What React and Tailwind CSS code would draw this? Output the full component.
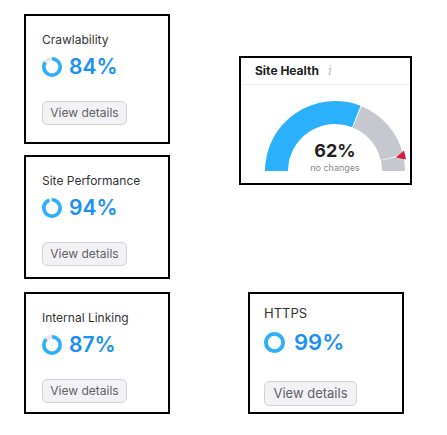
import React from "react";

function Ring({ pct, size = 20, stroke = 3.6 }) {
  const r = (size - stroke) / 2;
  const c = 2 * Math.PI * r;
  return (
    <svg width={size} height={size} viewBox={`0 0 ${size} ${size}`} className="shrink-0">
      <circle cx={size / 2} cy={size / 2} r={r} fill="none" stroke="#e3e4e8" strokeWidth={stroke} />
      <circle
        cx={size / 2}
        cy={size / 2}
        r={r}
        fill="none"
        stroke="#2bb1fb"
        strokeWidth={stroke}
        strokeDasharray={`${(pct / 100) * c} ${c}`}
        transform={`rotate(-90 ${size / 2} ${size / 2})`}
      />
    </svg>
  );
}

function MetricCard({ title, pct, className }) {
  return (
    <div className={`border-2 border-black bg-white pl-[16px] pt-[16px] flex flex-col items-start ${className}`}>
      <div className="text-[12px] leading-[16px] text-[#333]">{title}</div>
      <div className="mt-[6px] flex items-center gap-[7px] h-[26px]">
        <Ring pct={pct} />
        <span className="text-[21px] leading-[26px] font-semibold text-[#1890f7]">{pct}%</span>
      </div>
      <button className="mt-[21px] w-[85px] h-[24px] rounded-[5px] bg-[#f2f2f4] border border-[#d2d3d8] text-[12px] text-[#5f6068] flex items-center justify-center">
        View details
      </button>
    </div>
  );
}

function arcPath(cx, cy, R, r, a0, a1) {
  const rad = (d) => (d * Math.PI) / 180;
  const p = (rr, a) => [cx + rr * Math.cos(rad(a)), cy - rr * Math.sin(rad(a))];
  const [x0, y0] = p(R, a0);
  const [x1, y1] = p(R, a1);
  const [x2, y2] = p(r, a1);
  const [x3, y3] = p(r, a0);
  return `M${x0} ${y0} A${R} ${R} 0 0 1 ${x1} ${y1} L${x2} ${y2} A${r} ${r} 0 0 0 ${x3} ${y3} Z`;
}

function Gauge() {
  const cx = 70, cy = 71, R = 70, r = 47;
  return (
    <div className="relative w-[146px] h-[72px]">
      <svg width="146" height="72" viewBox="0 0 146 72" className="overflow-visible">
        <path d={arcPath(cx, cy, R, r, 180, 68.6)} fill="#2bb1fb" />
        <path d={arcPath(cx, cy, R, r, 67.8, 13.6)} fill="#c6c8cf" />
        <path d={arcPath(cx, cy, R, r, 12.8, 0)} fill="#c6c8cf" />
        <polygon points="131,57.5 139,50.5 141,59.5" fill="#d9183b" />
      </svg>
      <div className="absolute left-0 w-[140px] top-[41px] flex flex-col items-center">
        <span className="text-[18px] leading-[20px] font-bold text-[#222]">62%</span>
        <span className="text-[9px] leading-[11px] text-[#8a8a8f] mt-[1px]">no changes</span>
      </div>
    </div>
  );
}

export default function App() {
  return (
    <div
      className="w-[447px] h-[435px] bg-white flex"
      style={{ fontFamily: "Inter, 'Noto Sans', sans-serif" }}
    >
      <div className="flex flex-col pl-[24px] pt-[14px]">
        <MetricCard title="Crawlability" pct={84} className="w-[146px] h-[130px]" />
        <MetricCard title="Site Performance" pct={94} className="w-[146px] h-[124px] mt-[11px]" />
        <MetricCard title="Internal Linking" pct={87} className="w-[146px] h-[122px] mt-[13px]" />
      </div>
      <div className="flex flex-col ml-[69px] pt-[56px]">
        <div className="w-[173px] h-[129px] border-2 border-black bg-white flex flex-col">
          <div className="h-[27px] flex items-center pl-[14px] border-b border-[#ececee] gap-[9px]">
            <span className="text-[12px] font-bold text-[#222]">Site Health</span>
            <span className="text-[12px] italic text-[#b5b6bb]" style={{ fontFamily: "'DejaVu Serif', serif" }}>i</span>
          </div>
          <div className="pl-[24px] pt-[15px]">
            <Gauge />
          </div>
        </div>
        <div className="ml-[9px] mt-[107px] w-[156px] h-[122px] border-2 border-black bg-white pl-[14px] pt-[10px] flex flex-col items-start">
          <div className="text-[13px] leading-[18px] text-[#333]">HTTPS</div>
          <div className="mt-[6px] flex items-center gap-[9px] h-[28px]">
            <Ring pct={99} size={21} stroke={3.8} />
            <span className="text-[22px] leading-[28px] font-semibold text-[#1890f7]">99%</span>
          </div>
          <button className="mt-[25px] w-[93px] h-[25px] rounded-[5px] bg-[#f2f2f4] border border-[#d2d3d8] text-[13px] text-[#5f6068] flex items-center justify-center">
            View details
          </button>
        </div>
      </div>
    </div>
  );
}
